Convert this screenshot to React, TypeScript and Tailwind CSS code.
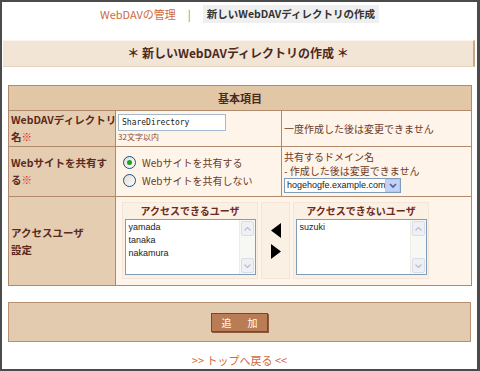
import React from "react";

const font = { fontFamily: '"Noto Sans CJK JP", "Liberation Sans", sans-serif' };

function Radio({ checked }: { checked?: boolean }) {
  return (
    <span className="inline-flex w-[13px] h-[13px] rounded-full border border-[#1c5180] bg-gradient-to-br from-[#dcdcd7] to-white items-center justify-center">
      {checked && <span className="w-[5px] h-[5px] rounded-full bg-[#21a121]" />}
    </span>
  );
}

function Scrollbar() {
  return (
    <div className="w-[16px] h-full flex flex-col bg-[#f7f7f3] border-l border-[#eeede5]">
      <div className="h-[15px] m-[1px] rounded-[2px] bg-[#eef0f5] border border-[#d8dde8] flex items-center justify-center">
        <svg width="7" height="4" viewBox="0 0 7 4">
          <path d="M0.5 3.5 L3.5 0.5 L6.5 3.5" fill="none" stroke="#b8bfcc" strokeWidth="1.2" />
        </svg>
      </div>
      <div className="flex-1" />
      <div className="h-[15px] m-[1px] rounded-[2px] bg-[#eef0f5] border border-[#d8dde8] flex items-center justify-center">
        <svg width="7" height="4" viewBox="0 0 7 4">
          <path d="M0.5 0.5 L3.5 3.5 L6.5 0.5" fill="none" stroke="#b8bfcc" strokeWidth="1.2" />
        </svg>
      </div>
    </div>
  );
}

function UserList({ title, users }: { title: string; users: string[] }) {
  return (
    <div className="w-[136px] h-[77px] bg-[#fbf0e4] border border-[#f3e6d8] flex flex-col items-center">
      <div className="h-[16px] leading-[16px] text-[10px] font-bold text-[#6e2a22] whitespace-nowrap">{title}</div>
      <div className="w-[131px] h-[56px] bg-white border border-[#7f9db9] flex">
        <div className="flex-1 px-[3px] pt-[1px] text-[9px] leading-[13px] text-[#222]" style={{ fontFamily: '"Liberation Sans", sans-serif' }}>
          {users.map((u) => (
            <div key={u}>{u}</div>
          ))}
        </div>
        <Scrollbar />
      </div>
    </div>
  );
}

const labelCls =
  "border border-[#b08a6a] bg-[#e5cdb2] px-[2px] align-middle text-[10.5px] font-bold leading-[17px] text-[#5a2a1c] whitespace-nowrap";
const valueCls = "border border-[#b08a6a] bg-[#fff4e9] align-middle text-[10px] text-[#6d3a28]";

export default function App() {
  return (
    <div className="w-[480px] h-[371px] bg-white border-t-2 border-l-2 border-r-[3px] border-b-2 border-[#4b4b4b] flex flex-col" style={font}>
      {/* top nav */}
      <div className="mt-[3px] flex items-center justify-center h-[18px]">
        <span className="text-[11px] text-[#cf6a3c]">WebDAVの管理</span>
        <span className="mx-[12px] text-[11px] text-[#888]">|</span>
        <span className="bg-[#efefef] px-[4px] h-[18px] leading-[18px] text-[10.5px] font-bold text-[#333]">新しいWebDAVディレクトリの作成</span>
      </div>

      {/* title bar */}
      <div className="mt-[17px] ml-[1px] w-[472px] h-[27px] bg-[#f3e5d6] border-t border-[#fbf4ec] border-r-2 border-r-[#c9a888] border-b border-b-[#e3d2bf] flex items-center justify-center text-[12px] font-bold text-[#4b2a1c]">
        ＊ 新しいWebDAVディレクトリの作成 ＊
      </div>

      {/* form table */}
      <table className="mt-[18px] ml-[6px] w-[463px] border-collapse table-fixed">
        <colgroup>
          <col className="w-[107px]" />
          <col className="w-[166px]" />
          <col className="w-[190px]" />
        </colgroup>
        <tbody>
          <tr className="h-[25px]">
            <th colSpan={3} className="border border-[#b08a6a] bg-[#e2c7a7] text-[11px] font-bold text-[#4b2a1c]">基本項目</th>
          </tr>
          <tr className="h-[36px]">
            <td className={labelCls}>
              WebDAVディレクトリ<br />名<span className="text-[#e0201a]">※</span>
            </td>
            <td className={valueCls + " px-[2px]"}>
              <div className="w-[108px] h-[17px] bg-white border border-[#a5b9cc] px-[3px] text-[8px] leading-[15px] text-[#222]" style={{ fontFamily: '"DejaVu Sans Mono", monospace' }}>
                ShareDirectory
              </div>
              <div className="text-[8px] leading-[11px] text-[#8a4a30]">32文字以内</div>
            </td>
            <td className={valueCls + " px-[2px]"}>一度作成した後は変更できません</td>
          </tr>
          <tr className="h-[50px]">
            <td className={labelCls}>
              Webサイトを共有す<br />る<span className="text-[#e0201a]">※</span>
            </td>
            <td className={valueCls + " pl-[7px]"}>
              <div className="flex items-center gap-[6px] h-[18px]">
                <Radio checked />
                <span>Webサイトを共有する</span>
              </div>
              <div className="flex items-center gap-[6px] h-[18px]">
                <Radio />
                <span>Webサイトを共有しない</span>
              </div>
            </td>
            <td className={valueCls + " px-[2px]"}>
              <div className="h-[14px] leading-[14px]">共有するドメイン名</div>
              <div className="h-[14px] leading-[14px]">- 作成した後は変更できません</div>
              <div className="w-[117px] h-[15px] bg-white border border-[#7f9db9] flex items-center">
                <span className="flex-1 pl-[2px] text-[9px] text-[#222] leading-[13px] whitespace-nowrap overflow-hidden" style={{ fontFamily: '"Liberation Sans", sans-serif' }}>hogehogfe.example.com</span>
                <span className="w-[15px] h-[13px] bg-[#c1d3fb] border border-[#b4c8f0] flex items-center justify-center">
                  <svg width="8" height="5" viewBox="0 0 8 5">
                    <path d="M1 1 L4 4 L7 1" fill="none" stroke="#4d6185" strokeWidth="1.6" />
                  </svg>
                </span>
              </div>
            </td>
          </tr>
          <tr className="h-[89px]">
            <td className={labelCls}>
              アクセスユーザ<br />設定
            </td>
            <td colSpan={2} className={valueCls + " pl-[6px]"}>
              <div className="flex gap-[3px] items-stretch">
                <UserList title="アクセスできるユーザ" users={["yamada", "tanaka", "nakamura"]} />
                <div className="w-[29px] bg-[#fbf0e4] border border-[#f3e6d8] flex flex-col items-center justify-center gap-[6px]">
                  <svg width="10" height="15" viewBox="0 0 10 15">
                    <polygon points="10,0 10,15 0,7.5" fill="#000" />
                  </svg>
                  <svg width="10" height="15" viewBox="0 0 10 15">
                    <polygon points="0,0 0,15 10,7.5" fill="#000" />
                  </svg>
                </div>
                <UserList title="アクセスできないユーザ" users={["suzuki"]} />
              </div>
            </td>
          </tr>
        </tbody>
      </table>

      {/* submit panel */}
      <div className="mt-[16px] ml-[6px] w-[463px] h-[41px] bg-[#e3cbaf] border border-[#b9906e] flex items-center justify-center">
        <button className="w-[57px] h-[19px] bg-[#b97c55] border border-[#7b4a2b] shadow-[1px_1px_0_#8a5a3a] text-white text-[10px] flex items-center justify-center gap-[16px] whitespace-nowrap" style={font}>
          <span>追</span>
          <span>加</span>
        </button>
      </div>

      {/* footer */}
      <div className="mt-[10px] text-center text-[11px] text-[#d2693c]">&gt;&gt; トップへ戻る &lt;&lt;</div>
    </div>
  );
}
